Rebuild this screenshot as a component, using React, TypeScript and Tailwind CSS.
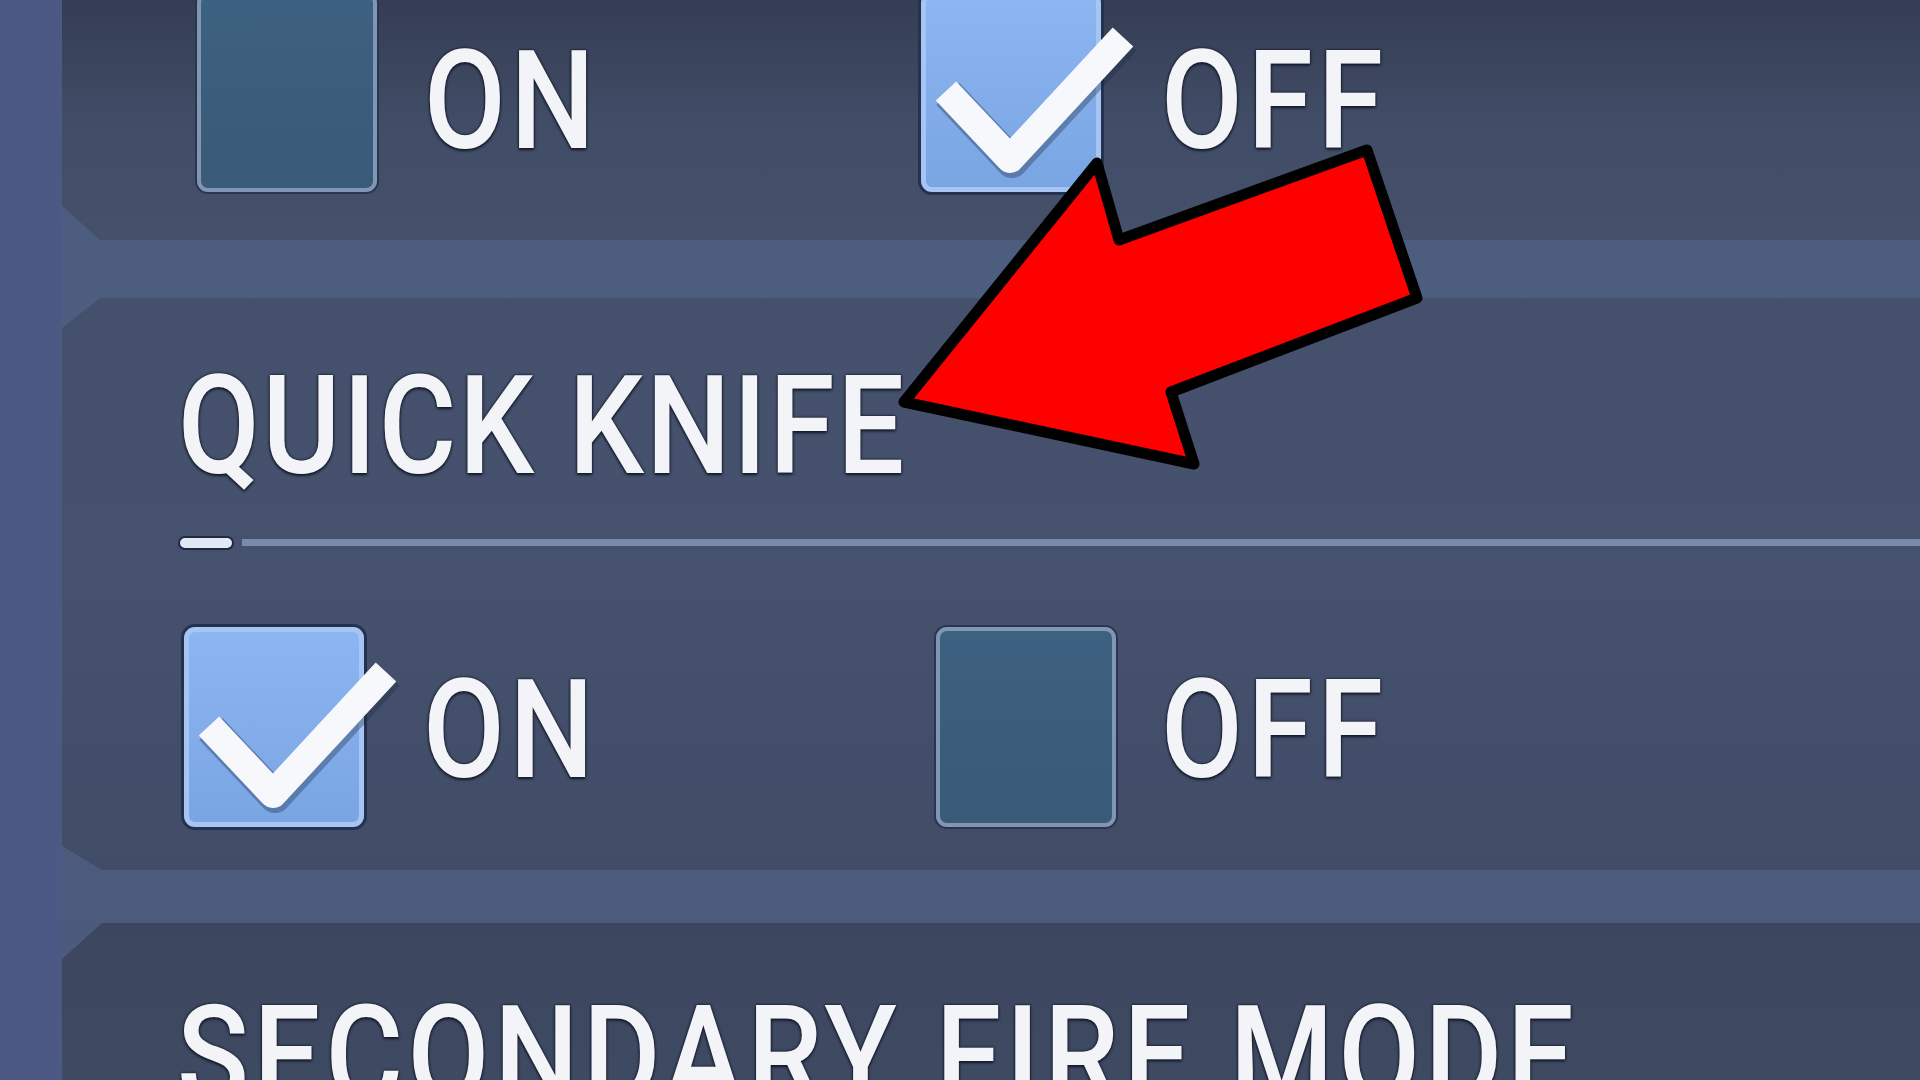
import React from "react";

const labelBase =
  "font-['Roboto','Noto_Sans',sans-serif] font-medium text-[138px] leading-none text-[#f3f4f8] inline-block origin-left scale-x-[0.86] whitespace-nowrap [text-shadow:0_0_3px_#161c2c,0_0_2px_#161c2c,0_2px_3px_#161c2c]";
const labelFont = `${labelBase} tracking-[0.04em]`;
const titleTight = `${labelBase} tracking-[0.022em]`;

function CheckMark() {
  return (
    <svg
      className="absolute left-0 top-0 overflow-visible"
      width="180"
      height="200"
      viewBox="0 0 180 200"
    >
      <path
        d="M20 94 L84 162 L197 40"
        fill="none"
        stroke="#1e2a44"
        strokeOpacity="0.35"
        strokeWidth="32"
        strokeLinejoin="round"
        transform="translate(2 3)"
      />
      <path
        d="M20 94 L84 162 L197 40"
        fill="none"
        stroke="#f7f8fb"
        strokeWidth="28"
        strokeLinejoin="round"
      />
    </svg>
  );
}

function Box({ checked }: { checked: boolean }) {
  if (checked) {
    return (
      <div className="relative w-[180px] h-[200px] shrink-0 rounded-[11px] border-[5px] border-[#a6c5f2] bg-gradient-to-b from-[#8cb6f2] to-[#79a5e2] shadow-[0_0_0_3px_#243150]">
        <CheckMark />
      </div>
    );
  }
  return (
    <div className="w-[180px] h-[200px] shrink-0 rounded-[11px] border-[4px] border-[#8196b4] bg-gradient-to-b from-[#3d6180] to-[#395a78] shadow-[0_0_0_2px_#2a3550]" />
  );
}

function Option({
  checked,
  label,
  gap,
  shift,
}: {
  checked: boolean;
  label: string;
  gap: string;
  shift: string;
}) {
  return (
    <div className="flex items-center shrink-0">
      <Box checked={checked} />
      <span className={`${gap} ${shift} ${labelFont}`}>{label}</span>
    </div>
  );
}

export default function App() {
  return (
    <div className="relative w-[1920px] h-[1080px] overflow-hidden flex bg-gradient-to-r from-[#4b5883] via-[#56638f] to-[#505d89]">
      <div className="w-[62px] shrink-0" />

      <div className="flex-1 flex flex-col bg-gradient-to-b from-[#4b5b7c] via-[#4f5f81] to-[#4a597a]">
        {/* Upper option card (title scrolled out of view) */}
        <div className="h-[240px] shrink-0 flex items-end pb-[48px] pl-[135px] bg-gradient-to-b from-[#343d53] via-[#414c66] to-[#45506b] [clip-path:polygon(0_0,100%_0,100%_100%,38px_100%,0_calc(100%-34px))]">
          <div className="flex items-center">
            <div className="w-[724px] flex">
              <Option checked={false} label="ON" gap="ml-[47px]" shift="translate-y-[9px]" />
            </div>
            <Option checked={true} label="OFF" gap="ml-[60px]" shift="translate-y-[9px]" />
          </div>
        </div>

        {/* Quick knife card */}
        <div className="mt-[58px] h-[572px] shrink-0 flex flex-col pt-[59px] pl-[116px] bg-gradient-to-b from-[#44506c] via-[#45516d] to-[#414c67] [clip-path:polygon(0_30px,38px_0,100%_0,100%_100%,40px_100%,0_calc(100%-24px))]">
          <div className="h-[138px] flex items-center">
            <span className={titleTight}>QUICK KNIFE</span>
          </div>
          <div className="mt-[42px] ml-[2px] flex items-center h-[11px]">
            <div className="w-[52px] h-[10px] rounded-full bg-[#e2e8f6] shadow-[0_0_0_2px_#1f2940]" />
            <div className="ml-[10px] flex-1 h-[7px] bg-[#7b8bac]" />
          </div>
          <div className="mt-[79px] ml-[6px] flex items-center">
            <div className="w-[752px] flex">
              <Option checked={true} label="ON" gap="ml-[59px]" shift="translate-y-[3px]" />
            </div>
            <Option checked={false} label="OFF" gap="ml-[45px]" shift="translate-y-[3px]" />
          </div>
        </div>

        {/* Secondary fire mode card */}
        <div className="mt-[53px] flex-1 pt-[64px] pl-[115px] bg-gradient-to-b from-[#3c465f] to-[#3f4a63] [clip-path:polygon(0_36px,40px_0,100%_0,100%_100%,0_100%)]">
          <div className="h-[138px] flex items-center">
            <span className={labelFont}>SECONDARY FIRE MODE</span>
          </div>
        </div>
      </div>

      {/* Callout arrow */}
      <svg
        className="absolute left-0 top-0 pointer-events-none"
        width="1920"
        height="1080"
        viewBox="0 0 1920 1080"
      >
        <polygon
          points="904,402 1097,163 1119,240 1367,150 1417,298 1171,392 1194,464"
          fill="#ff0000"
          stroke="#000000"
          strokeWidth="11"
          strokeLinejoin="round"
        />
      </svg>
    </div>
  );
}
